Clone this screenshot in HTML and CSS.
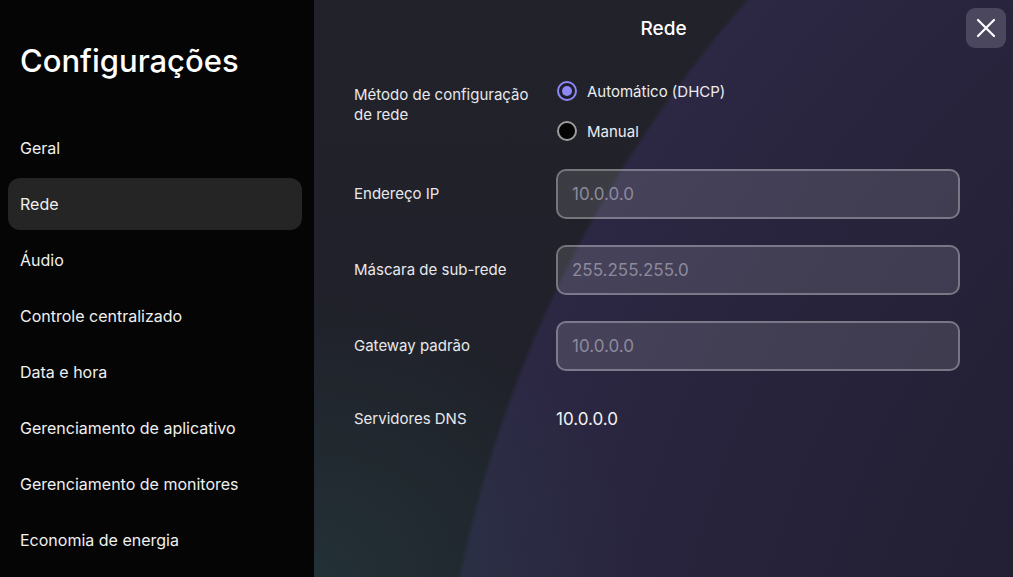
FILE: index.html
```html
<!DOCTYPE html>
<html lang="pt-BR">
<head>
  <meta charset="UTF-8">
  <meta name="viewport" content="width=device-width, initial-scale=1.0">
  <title>Configurações</title>
  <link rel="stylesheet" href="styles.css">
</head>
<body>
  <div class="app">
    <aside class="sidebar">
      <h1 class="sidebar-title">Configurações</h1>
      <nav class="menu">
        <a class="menu-item">Geral</a>
        <a class="menu-item active">Rede</a>
        <a class="menu-item">Áudio</a>
        <a class="menu-item">Controle centralizado</a>
        <a class="menu-item">Data e hora</a>
        <a class="menu-item">Gerenciamento de aplicativo</a>
        <a class="menu-item">Gerenciamento de monitores</a>
        <a class="menu-item">Economia de energia</a>
      </nav>
    </aside>

    <main class="panel">
      <header class="panel-header">
        <span></span>
        <h2 class="panel-title">Rede</h2>
        <button class="close-btn" aria-label="Fechar">
          <svg width="20" height="20" viewBox="0 0 20 20">
            <path d="M2 2 L18 18 M18 2 L2 18" stroke="#fff" stroke-width="2.2" stroke-linecap="round"/>
          </svg>
        </button>
      </header>

      <div class="form">
        <div class="row row-top">
          <div class="label label-wrap">Método de configuração de rede</div>
          <div class="radios">
            <label class="radio">
              <span class="dot checked"></span>
              Automático (DHCP)
            </label>
            <label class="radio">
              <span class="dot"></span>
              Manual
            </label>
          </div>
        </div>

        <div class="row">
          <div class="label">Endereço IP</div>
          <input class="field" type="text" placeholder="10.0.0.0">
        </div>

        <div class="row">
          <div class="label">Máscara de sub-rede</div>
          <input class="field" type="text" placeholder="255.255.255.0">
        </div>

        <div class="row">
          <div class="label">Gateway padrão</div>
          <input class="field" type="text" placeholder="10.0.0.0">
        </div>

        <div class="row row-dns">
          <div class="label">Servidores DNS</div>
          <div class="value">10.0.0.0</div>
        </div>
      </div>
    </main>
  </div>
</body>
</html>
```

FILE: styles.css
```css
* {
  box-sizing: border-box;
  font-family: 'Inter', 'Liberation Sans', sans-serif;
}
body {
  margin: 0;
  background-color: #050505;
  color: #f2f2f2;
}
.app {
  display: flex;
  width: 1013px;
  height: 577px;
  overflow: hidden;
}
.sidebar {
  width: 314px;
  flex-shrink: 0;
  background-color: #050505;
  padding-top: 41px;
}
.sidebar-title {
  margin: 0 0 41px 20px;
  font-size: 31px;
  line-height: 40px;
  font-weight: 500;
  color: #ffffff;
}
.menu {
  display: flex;
  flex-direction: column;
  gap: 4px;
}
.menu-item {
  display: flex;
  align-items: center;
  height: 52px;
  margin: 0 12px 0 8px;
  padding-left: 12px;
  border-radius: 12px;
  font-size: 16px;
  color: #f0f0f0;
}
.menu-item.active {
  background-color: #252525;
}
/* backdrop: curved purple sweep on the right, teal glow bottom-left */
.panel {
  flex: 1;
  background-color: #1f2029;
  background-image:
    radial-gradient(ellipse 320px 280px at 0% 100%, rgba(40, 72, 70, 0.42), rgba(40, 72, 70, 0) 100%),
    radial-gradient(circle 1256px at 1374px 829px, #221f33 55%, #28243d 85%, #2c2844 99.6%, rgba(44, 40, 68, 0) 100%),
    linear-gradient(180deg, #21222a 0%, #1f2029 100%);
}
.panel-header {
  display: grid;
  grid-template-columns: 1fr auto 1fr;
  align-items: center;
  height: 56px;
  padding: 0 7px;
}
.panel-title {
  margin: 0;
  font-size: 19px;
  font-weight: 500;
  color: #ffffff;
}
.close-btn {
  justify-self: end;
  width: 40px;
  height: 40px;
  border: none;
  border-radius: 9px;
  background-color: #4a475f;
  display: flex;
  align-items: center;
  justify-content: center;
  cursor: pointer;
  padding: 0;
}
.form {
  display: flex;
  flex-direction: column;
  gap: 26px;
  padding: 25px 0 0 40px;
}
.row {
  display: flex;
  align-items: center;
}
.row-top {
  align-items: flex-start;
  margin-bottom: 2px;
}
.row-dns {
  margin-top: 12px;
}
.label {
  width: 202px;
  flex-shrink: 0;
  font-size: 15px;
  line-height: 20px;
  color: #e8e8ec;
}
.label-wrap {
  padding-top: 4px;
  padding-right: 16px;
}
.radios {
  display: flex;
  flex-direction: column;
  gap: 20px;
}
.radio {
  display: flex;
  align-items: center;
  gap: 10px;
  height: 20px;
  font-size: 15px;
  color: #ececf0;
}
.dot {
  width: 20px;
  height: 20px;
  border-radius: 50%;
  border: 2px solid #9c9c9c;
  background-color: #050505;
  display: flex;
  align-items: center;
  justify-content: center;
  margin-left: 1px;
}
.dot.checked {
  border-color: #8c88f6;
  background-color: #1e1d2c;
}
.dot.checked::after {
  content: '';
  width: 10px;
  height: 10px;
  border-radius: 50%;
  background-color: #8c88f6;
}
.field {
  width: 404px;
  height: 50px;
  border: 2px solid rgba(255, 255, 255, 0.3);
  border-radius: 10px;
  background-color: rgba(255, 255, 255, 0.12);
  padding: 0 14px;
  font-size: 17px;
  color: #ffffff;
  outline: none;
}
.field::placeholder {
  color: #8d8a9c;
}
.value {
  font-size: 17px;
  color: #f2f2f2;
}
```
